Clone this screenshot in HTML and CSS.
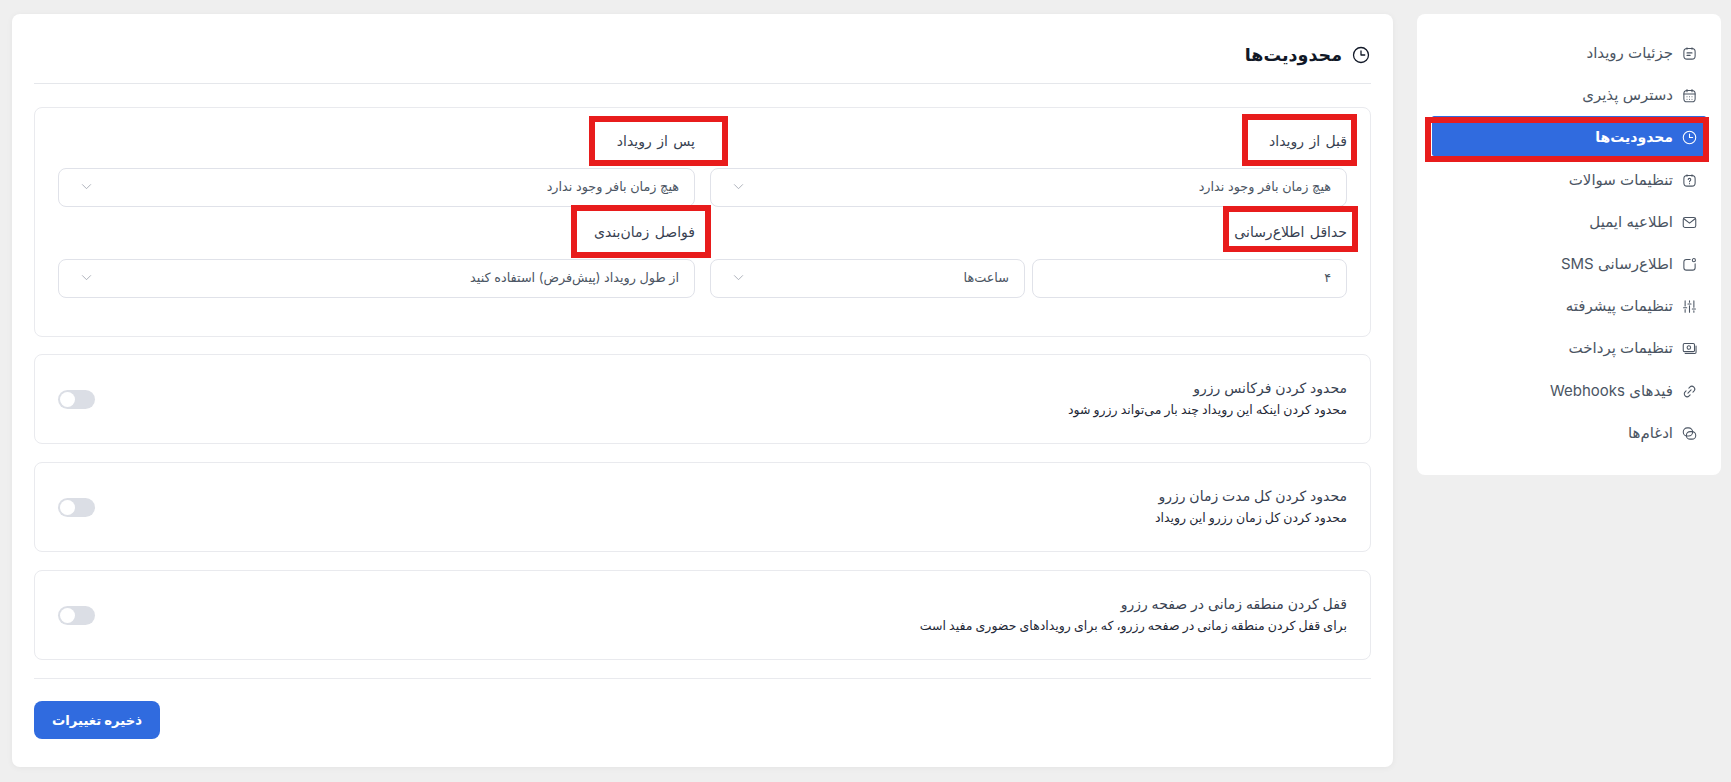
FILE: index.html
```html
<!DOCTYPE html>
<html lang="fa" dir="rtl">
<head>
<meta charset="utf-8">
<title>محدودیت‌ها</title>
<link rel="stylesheet" href="styles.css">
</head>
<body>
<div class="page">
  <nav class="side">
    <a class="item"><svg class="ico" viewBox="0 0 24 24"><rect x="3" y="4" width="18" height="17" rx="5"/><path d="M8 3v2M16 3v2M8 11h8M8 15h5"/></svg><span>جزئیات رویداد</span></a>
    <a class="item"><svg class="ico" viewBox="0 0 24 24"><rect x="3" y="4" width="18" height="18" rx="5"/><path d="M8 2.500V6M16 2.500V6M3 9.500h18M8 14h.01M12 14h.01M16 14h.01M8 18h.01M12 18h.01M16 18h.01"/></svg><span>دسترس پذیری</span></a>
    <a class="item active"><svg class="ico" viewBox="0 0 24 24"><circle cx="12" cy="12" r="10"/><path d="M12 6.500V12h5"/></svg><span>محدودیت‌ها</span></a>
    <a class="item"><svg class="ico" viewBox="0 0 24 24"><rect x="3" y="4" width="18" height="17" rx="5"/><path d="M8 3v2M16 3v2M10 10.500a2 2 0 1 1 3 1.800c-.7.400-1 .800-1 1.700M12 17h.01"/></svg><span>تنظیمات سوالات</span></a>
    <a class="item"><svg class="ico" viewBox="0 0 24 24"><rect x="2" y="4" width="20" height="16" rx="3"/><path d="M3 6l9 7 9-7"/></svg><span>اطلاعیه ایمیل</span></a>
    <a class="item"><svg class="ico" viewBox="0 0 24 24"><path d="M13 4H7a4 4 0 0 0-4 4v9a4 4 0 0 0 4 4h10a4 4 0 0 0 4-4v-6"/><circle cx="19" cy="5" r="2.500"/></svg><span>اطلاع‌رسانی SMS</span></a>
    <a class="item"><svg class="ico" viewBox="0 0 24 24"><path d="M5 3v8M5 17v4M12 3v2M12 11v10M19 3v10M19 19v2M2.500 14h5M9.500 8h5M16.500 16h5"/></svg><span>تنظیمات پیشرفته</span></a>
    <a class="item"><svg class="ico" viewBox="0 0 24 24"><rect x="2" y="4" width="18" height="13" rx="2"/><circle cx="11" cy="10.500" r="2.800"/><path d="M22.500 8v10a2 2 0 0 1-2 2H5"/></svg><span>تنظیمات پرداخت</span></a>
    <a class="item"><svg class="ico" viewBox="0 0 24 24"><path d="M9.500 14.500l5-5M11 6.500l1.500-1.500a4.500 4.500 0 0 1 6.500 6.500L17.500 13M13 17.500L11.500 19a4.500 4.500 0 0 1-6.500-6.500L6.500 11"/></svg><span>فیدهای Webhooks</span></a>
    <a class="item"><svg class="ico" viewBox="0 0 24 24"><rect x="2" y="3" width="15" height="13" rx="6.500"/><rect x="7" y="9" width="15" height="12" rx="6"/></svg><span>ادغام‌ها</span></a>
  </nav>
  <main class="main">
    <h1 class="head"><svg class="ico big" viewBox="0 0 24 24"><circle cx="12" cy="12" r="10"/><path d="M12 6.500V12h5"/></svg>محدودیت‌ها</h1>
    <section class="box limits">
      <div class="field">
        <label class="lbl">قبل از رویداد</label>
        <div class="ctl"><span>هیچ زمان بافر وجود ندارد</span><svg class="chev" viewBox="0 0 12 8"><path d="M1 1.500l5 5 5-5"/></svg></div>
      </div>
      <div class="field">
        <label class="lbl">پس از رویداد</label>
        <div class="ctl"><span>هیچ زمان بافر وجود ندارد</span><svg class="chev" viewBox="0 0 12 8"><path d="M1 1.500l5 5 5-5"/></svg></div>
      </div>
      <div class="field">
        <label class="lbl">حداقل اطلاع‌رسانی</label>
        <div class="pair">
          <div class="ctl"><span>۴</span></div>
          <div class="ctl"><span>ساعت‌ها</span><svg class="chev" viewBox="0 0 12 8"><path d="M1 1.500l5 5 5-5"/></svg></div>
        </div>
      </div>
      <div class="field">
        <label class="lbl">فواصل زمان‌بندی</label>
        <div class="ctl"><span>از طول رویداد (پیش‌فرض) استفاده کنید</span><svg class="chev" viewBox="0 0 12 8"><path d="M1 1.500l5 5 5-5"/></svg></div>
      </div>
    </section>
    <section class="box row">
      <div><h2 class="ttl">محدود کردن فرکانس رزرو</h2><p class="sub">محدود کردن اینکه این رویداد چند بار می‌تواند رزرو شود</p></div>
      <span class="tog"></span>
    </section>
    <section class="box row">
      <div><h2 class="ttl">محدود کردن کل مدت زمان رزرو</h2><p class="sub">محدود کردن کل زمان رزرو این رویداد</p></div>
      <span class="tog"></span>
    </section>
    <section class="box row">
      <div><h2 class="ttl">قفل کردن منطقه زمانی در صفحه رزرو</h2><p class="sub">برای قفل کردن منطقه زمانی در صفحه رزرو، که برای رویدادهای حضوری مفید است</p></div>
      <span class="tog"></span>
    </section>
    <footer class="foot"><button class="save">ذخیره تغییرات</button></footer>
  </main>
  <i class="mark m1"></i><i class="mark m2"></i><i class="mark m3"></i><i class="mark m4"></i><i class="mark m5"></i>
</div>
</body>
</html>
```

FILE: styles.css
```css
* { box-sizing: border-box; }
html, body { margin: 0; height: 100%; }
body {
  background: #efefef;
  color: #374151;
  font-family: "Inter", "Noto Sans", "DejaVu Sans", sans-serif;
  font-size: 14px;
}
.page {
  position: relative;
  display: flex;
  align-items: flex-start;
  gap: 24px;
  width: 1731px;
  height: 782px;
  padding: 14px 10px 15px 12px;
  overflow: hidden;
}
.side {
  flex: 0 0 304px;
  height: 461px;
  display: flex;
  flex-direction: column;
  gap: 8.2px;
  padding: 22px 18px 0 15px;
  background: #fff;
  border-radius: 8px;
}
.item {
  display: flex;
  align-items: center;
  gap: 9px;
  height: 34px;
  padding-right: 6px;
  font-size: 15px;
  font-weight: 400;
  color: #4b5563;
  border-radius: 6px;
}
.item span { margin-top: -2px; }
.item.active {
  height: 39.6px;
  margin: -4px -3px -1px 0;
  padding: 4px 9px 1px 0;
  font-size: 14px;
  font-weight: 700;
  color: #fff;
  background: #306bdf;
  border-radius: 2px;
}
.ico {
  width: 15px;
  height: 15px;
  flex: none;
  fill: none;
  stroke: currentColor;
  stroke-width: 1.7;
  stroke-linecap: round;
  stroke-linejoin: round;
}
.ico.big { width: 18px; height: 18px; color: #111827; stroke-width: 1.7; }
.main {
  flex: 1;
  height: 753px;
  padding: 0 22px;
  background: #fff;
  border-radius: 8px;
  box-shadow: 0 1px 6px rgba(0, 0, 0, .05);
}
.head {
  display: flex;
  align-items: center;
  gap: 10px;
  height: 70px;
  margin: 0 0 23px;
  padding: 12px 1px 0;
  font-size: 17.500px;
  font-weight: 700;
  color: #111827;
  border-bottom: 1px solid #e5e7eb;
}
.box {
  background: #fff;
  border: 1px solid #e9eaee;
  border-radius: 8px;
}
.limits {
  display: grid;
  grid-template-columns: 1fr 1fr;
  column-gap: 15px;
  row-gap: 13px;
  height: 230px;
  padding: 21px 23px 38px;
  margin-bottom: 17px;
  align-content: start;
}
.lbl {
  display: block;
  height: 24px;
  line-height: 24px;
  margin-bottom: 15px;
  font-size: 14px;
  word-spacing: 1.500px;
  font-weight: 400;
  color: #374151;
}
.pair { display: flex; gap: 7px; }
.pair .ctl { flex: 0 0 315px; }
.ctl {
  display: flex;
  align-items: center;
  justify-content: space-between;
  height: 39px;
  padding: 0 15px 2px 22px;
  font-size: 12.800px;
  color: #4b5563;
  border: 1px solid #e0e2e9;
  border-radius: 8px;
  background: #fff;
}
.chev { width: 11px; height: 7px; fill: none; stroke: #a2a7b1; stroke-width: 1; }
.row {
  display: flex;
  align-items: center;
  justify-content: space-between;
  height: 90px;
  margin-bottom: 18px;
  padding: 0 23px;
}
.ttl {
  margin: 0 0 2px;
  font-size: 14px;
  line-height: 20px;
  font-weight: 400;
  color: #374151;
}
.sub {
  margin: 0;
  font-size: 12.500px;
  word-spacing: -.4px;
  line-height: 20px;
  color: #1f2937;
}
.tog {
  position: relative;
  display: block;
  width: 37px;
  height: 19px;
  border-radius: 10px;
  background: #dbdee5;
}
.tog::after {
  content: "";
  position: absolute;
  top: 2px;
  right: 20px;
  width: 15px;
  height: 15px;
  border-radius: 50%;
  background: #fff;
}
.foot {
  border-top: 1px solid #e9eaee;
  padding-top: 22px;
}
.save {
  display: block;
  width: 126px;
  height: 38px;
  margin-right: auto;
  border: 0;
  border-radius: 8px;
  background: #306bdf;
  color: #fff;
  font: 700 13.200px "Inter", "Noto Sans", "DejaVu Sans", sans-serif;
}
.mark {
  position: absolute;
  border: 6px solid #e81c1c;
  pointer-events: none;
}
.m1 { left: 1425px; top: 117px; width: 284px; height: 45px; }
.m2 { left: 1242px; top: 114px; width: 115px; height: 52px; }
.m3 { left: 589px; top: 116px; width: 139px; height: 50px; }
.m4 { left: 1223px; top: 206px; width: 135px; height: 46px; }
.m5 { left: 571px; top: 205px; width: 140px; height: 53px; }
```
